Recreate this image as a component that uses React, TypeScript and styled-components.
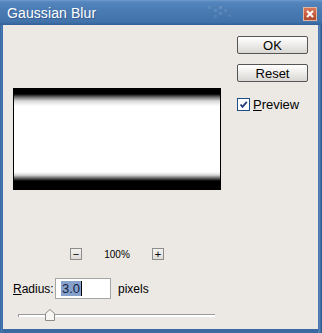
import React from 'react';
import styled, { createGlobalStyle } from 'styled-components';

const Global = createGlobalStyle`
  html, body {
    margin: 0;
    padding: 0;
    background: #ece9e4;
  }
`;

const Window = styled.div`
  width: 322px;
  height: 333px;
  box-sizing: border-box;
  display: flex;
  flex-direction: column;
  background: linear-gradient(90deg, #2c5a90 0, #4c7db7 1px, #3b6aa3 3px, #3b6aa3 calc(100% - 4px), #5a88bf calc(100% - 3px), #26548a 100%);
  font-family: "Liberation Sans", Arial, sans-serif;
`;

const TitleBar = styled.div`
  height: 25px;
  flex: none;
  display: flex;
  align-items: center;
  justify-content: space-between;
  padding: 0 5px 0 7px;
  box-sizing: border-box;
  background: linear-gradient(180deg, #6f9ccf 0, #5585bd 2px, #4b7bb3 10px, #4272aa 22px, #31609a 25px);
  position: relative;
`;

const Title = styled.span`
  color: #ffffff;
  font-size: 14px;
  letter-spacing: 0.1px;
  text-shadow: 1px 1px 0 rgba(20, 40, 80, 0.35);
  margin-top: 1px;
`;

const Deco = styled.svg`
  position: absolute;
  left: 206px;
  top: 4px;
`;

const CloseButton = styled.div`
  width: 14px;
  height: 14px;
  margin-top: 2px;
  box-sizing: border-box;
  border: 1px solid #e3b6a0;
  background: linear-gradient(180deg, #d9785a 0, #c45a3c 60%, #b04a30 100%);
  display: flex;
  align-items: center;
  justify-content: center;
`;

const Body = styled.div`
  flex: 1;
  margin: 0 4px 4px 3px;
  background: #ece9e4;
  display: flex;
  padding: 11px 10px 0 10px;
  gap: 16px;
`;

const LeftCol = styled.div`
  width: 208px;
  display: flex;
  flex-direction: column;
  margin-top: 52px;
`;

const RightCol = styled.div`
  width: 71px;
  display: flex;
  flex-direction: column;
`;

const Preview = styled.div`
  height: 102px;
  box-sizing: border-box;
  border-left: 1px solid #000;
  border-right: 1px solid #000;
  background: linear-gradient(
    180deg,
    #000 0,
    #000 6px,
    #6a6a6a 9px,
    #d8d8d8 13px,
    #fff 18px,
    #fff 84px,
    #d8d8d8 87px,
    #6a6a6a 90px,
    #000 93px,
    #000 100%
  );
`;

const ZoomRow = styled.div`
  margin-top: 58px;
  height: 12px;
  display: flex;
  align-items: center;
  justify-content: center;
  gap: 22px;
`;

const SmallButton = styled.div`
  width: 12px;
  height: 12px;
  box-sizing: border-box;
  border: 1px solid #8c8c8c;
  background: linear-gradient(180deg, #f4f3f1 0, #dcdad6 100%);
  display: flex;
  align-items: center;
  justify-content: center;
  color: #000;
  font-size: 11px;
  line-height: 1;
`;

const ZoomLabel = styled.span`
  font-size: 10px;
  color: #000;
  width: 26px;
  text-align: center;
`;

const RadiusRow = styled.div`
  margin-top: 18px;
  height: 21px;
  display: flex;
  align-items: center;
  font-size: 12px;
  color: #000;
`;

const Label = styled.span`
  width: 42px;
`;

const Key = styled.span`
  text-decoration: underline;
`;

const Input = styled.div`
  width: 56px;
  height: 21px;
  box-sizing: border-box;
  border: 1px solid #a5a5a5;
  background: #fff;
  display: flex;
  align-items: center;
  padding-left: 5px;
  margin-right: 7px;
  font-size: 13px;
`;

const Selected = styled.span`
  background: #86a2cc;
  color: #13203d;
  line-height: 15px;
  padding: 0 1px;
`;

const Caret = styled.span`
  width: 1px;
  height: 15px;
  background: #000;
`;

const SliderRow = styled.div`
  margin-top: 10px;
  height: 12px;
  position: relative;
  margin-left: 5px;
  width: 197px;
`;

const Track = styled.div`
  position: absolute;
  left: 0;
  right: 0;
  top: 5px;
  height: 3px;
  box-sizing: border-box;
  border-top: 1px solid #9a9a9a;
  border-left: 1px solid #9a9a9a;
  background: #fff;
`;

const Thumb = styled.svg`
  position: absolute;
  left: 27px;
  top: 0;
`;

const PushButton = styled.div`
  height: 18px;
  box-sizing: border-box;
  border: 1px solid #555;
  border-radius: 2px;
  background: linear-gradient(180deg, #ffffff 0, #f1f0ee 40%, #d9d7d3 100%);
  display: flex;
  align-items: center;
  justify-content: center;
  font-size: 13px;
  color: #000;
  margin-bottom: 10px;
`;

const CheckRow = styled.label`
  margin-top: 5px;
  display: flex;
  align-items: center;
  font-size: 13px;
  color: #000;
  gap: 3px;
`;

const CheckBox = styled.span`
  width: 13px;
  height: 13px;
  box-sizing: border-box;
  border: 1px solid #1c4f8a;
  background: #fff;
  display: flex;
  align-items: center;
  justify-content: center;
`;

export default function App() {
  return (
    <>
      <Global />
      <Window>
        <TitleBar>
          <Title>Gaussian Blur</Title>
          <Deco width="30" height="18" viewBox="0 0 30 18">
            <rect x="2" y="2" width="3" height="3" fill="#ffffff" opacity="0.08" />
            <rect x="8" y="5" width="3" height="3" fill="#ffffff" opacity="0.1" />
            <rect x="13" y="2" width="3" height="3" fill="#ffffff" opacity="0.12" />
            <rect x="13" y="8" width="3" height="3" fill="#ffffff" opacity="0.1" />
            <rect x="18" y="5" width="3" height="3" fill="#ffffff" opacity="0.08" />
            <rect x="8" y="11" width="3" height="3" fill="#ffffff" opacity="0.08" />
            <rect x="22" y="10" width="3" height="3" fill="#ffffff" opacity="0.06" />
          </Deco>
          <CloseButton>
            <svg width="8" height="8" viewBox="0 0 8 8">
              <path d="M1 1 L7 7 M7 1 L1 7" stroke="#fff" strokeWidth="2" />
            </svg>
          </CloseButton>
        </TitleBar>
        <Body>
          <LeftCol>
            <Preview />
            <ZoomRow>
              <SmallButton>−</SmallButton>
              <ZoomLabel>100%</ZoomLabel>
              <SmallButton>+</SmallButton>
            </ZoomRow>
            <RadiusRow>
              <Label>
                <Key>R</Key>adius:
              </Label>
              <Input>
                <Selected>3.0</Selected>
                <Caret />
              </Input>
              pixels
            </RadiusRow>
            <SliderRow>
              <Track />
              <Thumb width="10" height="12" viewBox="0 0 10 12">
                <path d="M0.5 11.5 L0.5 4.5 L5 0.5 L9.5 4.5 L9.5 11.5 Z" fill="#f7f6f3" stroke="#8a8a8a" />
              </Thumb>
            </SliderRow>
          </LeftCol>
          <RightCol>
            <PushButton>OK</PushButton>
            <PushButton>Reset</PushButton>
            <CheckRow>
              <CheckBox>
                <svg width="9" height="9" viewBox="0 0 9 9">
                  <path d="M1.5 4.5 L3.5 6.8 L7.8 1.8" fill="none" stroke="#21407a" strokeWidth="1.8" />
                </svg>
              </CheckBox>
              <span>
                <Key>P</Key>review
              </span>
            </CheckRow>
          </RightCol>
        </Body>
      </Window>
    </>
  );
}
